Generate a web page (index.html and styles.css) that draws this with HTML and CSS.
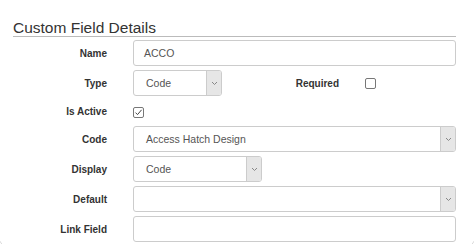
FILE: index.html
```html
<!DOCTYPE html>
<html lang="en">
<head>
  <meta charset="UTF-8" />
  <meta name="viewport" content="width=device-width, initial-scale=1.0"/>
  <title>Custom Field Details</title>
  <link rel="stylesheet" href="styles.css">
</head>
<body>
  <div class="panel">
    <h2 class="section-title">Custom Field Details</h2>

    <div class="form">
      <label class="field-label">Name</label>
      <div class="text-input">ACCO</div>

      <label class="field-label">Type</label>
      <div class="inline">
        <div class="select select-type">
          <span class="select-value">Code</span>
          <span class="select-btn"><svg width="7" height="5" viewBox="0 0 7 5"><path d="M1 1l2.5 2.5L6 1" fill="none" stroke="#888" stroke-width="1"/></svg></span>
        </div>
        <label class="field-label side-label">Required</label>
        <span class="checkbox"></span>
      </div>

      <label class="field-label">Is Active</label>
      <div class="check-row">
        <span class="checkbox"><svg width="9" height="9" viewBox="0 0 9 9"><path d="M1.5 4.6l2 2L7.6 1.8" fill="none" stroke="#444" stroke-width="1"/></svg></span>
      </div>

      <label class="field-label">Code</label>
      <div class="select">
        <span class="select-value">Access Hatch Design</span>
        <span class="select-btn"><svg width="7" height="5" viewBox="0 0 7 5"><path d="M1 1l2.5 2.5L6 1" fill="none" stroke="#888" stroke-width="1"/></svg></span>
      </div>

      <label class="field-label">Display</label>
      <div class="select select-display">
        <span class="select-value">Code</span>
        <span class="select-btn"><svg width="7" height="5" viewBox="0 0 7 5"><path d="M1 1l2.5 2.5L6 1" fill="none" stroke="#888" stroke-width="1"/></svg></span>
      </div>

      <label class="field-label">Default</label>
      <div class="select">
        <span class="select-value"></span>
        <span class="select-btn"><svg width="7" height="5" viewBox="0 0 7 5"><path d="M1 1l2.5 2.5L6 1" fill="none" stroke="#888" stroke-width="1"/></svg></span>
      </div>

      <label class="field-label">Link Field</label>
      <div class="text-input"></div>
    </div>
  </div>
</body>
</html>
```

FILE: styles.css
```css
html, body {
  overflow: hidden;
}

body {
  font-family: "Liberation Sans", Arial, sans-serif;
  background-color: white;
  margin: 0;
}

.panel {
  margin: -30px 0 0 -2px;
  width: 478px;
  height: 278px;
  box-sizing: border-box;
  border: 1px solid #dadada;
  border-radius: 12px;
  padding: 49px 0 0 14px;
}

.section-title {
  width: 443px;
  margin: 0;
  font-size: 15.5px;
  font-weight: normal;
  line-height: 16px;
  color: #333;
  border-bottom: 1px solid #bbb;
}

.form {
  width: 443px;
  margin-top: 3px;
  display: grid;
  grid-template-columns: 94px 1fr;
  column-gap: 26px;
  row-gap: 4px;
}

.field-label {
  align-self: center;
  text-align: right;
  font-size: 10px;
  font-weight: bold;
  color: #333;
}

.text-input,
.select {
  height: 26px;
  box-sizing: border-box;
  border: 1px solid #ccc;
  border-radius: 3px;
  font-size: 10.5px;
  color: #555;
  display: flex;
  align-items: center;
}

.text-input {
  padding: 0 10px;
}

.select-value {
  flex: 1;
  padding-left: 12px;
}

.select-btn {
  width: 14px;
  align-self: stretch;
  background-color: #e6e6e6;
  border-left: 1px solid #ccc;
  border-radius: 0 2px 2px 0;
  display: flex;
  align-items: center;
  justify-content: center;
}

.inline {
  display: flex;
  align-items: center;
}

.select-type {
  width: 89px;
}

.select-display {
  width: 129px;
}

.side-label {
  width: 117px;
  margin-right: 26px;
}

.check-row {
  height: 22px;
  display: flex;
  align-items: center;
  padding-top: 3px;
  box-sizing: border-box;
}

.checkbox {
  width: 11px;
  height: 11px;
  box-sizing: border-box;
  border: 1px solid #777;
  border-radius: 2px;
  background: white;
  display: flex;
  align-items: center;
  justify-content: center;
}
```
